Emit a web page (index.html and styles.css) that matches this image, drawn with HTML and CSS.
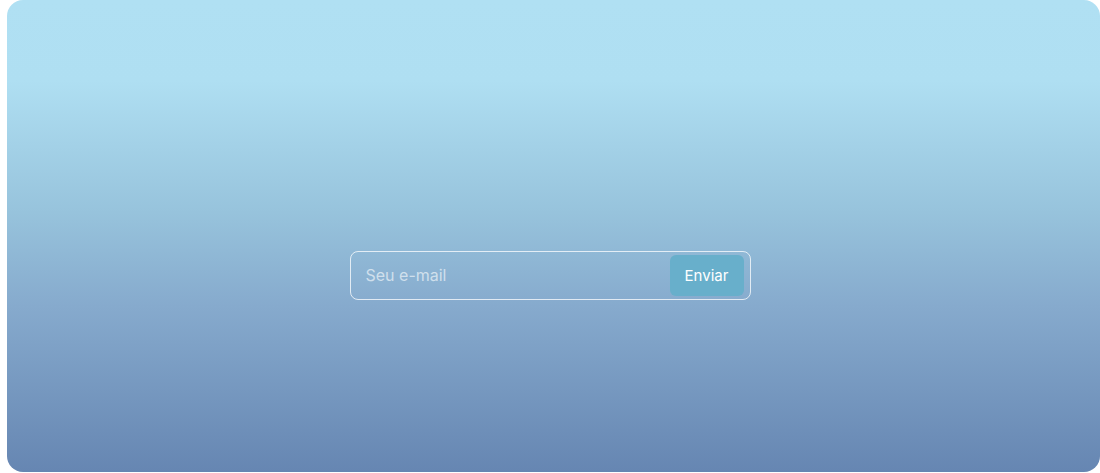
FILE: index.html
```html
<!DOCTYPE html>
<html lang="pt">
<head>
<meta charset="utf-8">
<link rel="stylesheet" href="styles.css">
</head>
<body>
<main class="hero">
  <form class="subscribe" onsubmit="return false">
    <input class="subscribe-input" type="email" placeholder="Seu e-mail">
    <button class="subscribe-btn" type="submit">Enviar</button>
  </form>
</main>
</body>
</html>
```
FILE: styles.css
```css
* { box-sizing: border-box; }
html, body { margin: 0; padding: 0; background: #ffffff; }
body { padding: 0 0 1px 7px; height: 473px; }
.hero {
  height: 472px;
  border-radius: 16px;
  background: linear-gradient(180deg, #b0e0f3 0%, #afdff2 17%, #97c3dc 45%, #86aacd 65%, #6686b2 100%);
  display: flex;
  align-items: center;
  justify-content: center;
  padding: 78px 7px 0 0;
  font-family: Inter, "Noto Sans", sans-serif;
}
.subscribe {
  width: 401px;
  height: 49px;
  border: 1px solid rgba(255,255,255,0.75);
  border-radius: 8px;
  display: flex;
  align-items: center;
  padding: 3px 6px 3px 15px;
  gap: 8px;
}
.subscribe-input {
  flex: 1;
  min-width: 0;
  background: transparent;
  border: none;
  outline: none;
  font-family: inherit;
  font-size: 16px;
  color: #ffffff;
  padding: 0;
}
.subscribe-input::placeholder { color: rgba(255,255,255,0.6); }
.subscribe-btn {
  width: 74px;
  height: 41px;
  border: none;
  border-radius: 6px;
  background: #68afcb;
  color: #ffffff;
  font-family: inherit;
  font-size: 15px;
  font-weight: 400;
}
```
